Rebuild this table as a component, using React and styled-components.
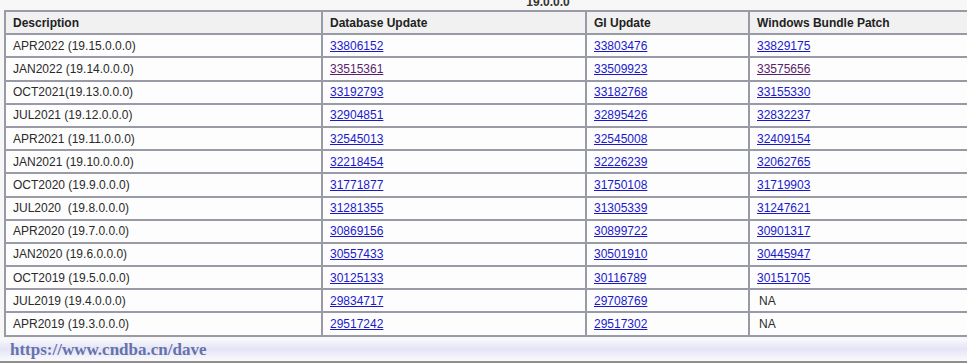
import React from 'react';
import styled, { createGlobalStyle } from 'styled-components';

const GlobalStyle = createGlobalStyle`
  html, body {
    margin: 0;
    padding: 0;
    background: #ffffff;
    overflow: hidden;
  }
  body {
    font-family: Arial, "Liberation Sans", sans-serif;
  }
`;

const Page = styled.div`
  width: 967px;
  height: 363px;
  overflow: hidden;
  background: #f7f7f7;
  display: flex;
  flex-direction: column;
`;

const TableWrap = styled.div`
  margin-top: -5px;
  padding-left: 4px;
`;

const Caption = styled.div`
  width: 1088px;
  text-align: center;
  font-weight: bold;
  font-size: 12px;
  line-height: 15px;
  color: #333;
`;

const Table = styled.table`
  width: 1088px;
  border-collapse: collapse;
  table-layout: fixed;
  border-bottom: 2px solid #3a3a3a;
`;

const HeadCell = styled.th`
  background: #f1f1f1;
  border: 2px solid #989aa6;
  text-align: left;
  font-weight: bold;
  font-size: 12px;
  color: #222;
  height: 19.2px;
  padding: 1px 7px;
`;

const Cell = styled.td`
  background: #fdfdfd;
  border: 2px solid #989aa6;
  font-size: 12px;
  color: #2a2a2a;
  height: 19.2px;
  padding: 1px 7px 1px ${(p) => (p.$na ? 9 : 7)}px;
  white-space: pre;
`;

const PatchLink = styled.a`
  color: ${(p) => (p.$visited ? '#5a1f6e' : '#1a1acc')};
  text-decoration: underline;
`;

const Footer = styled.div`
  margin-top: 2px;
  height: 22px;
  display: flex;
  align-items: center;
  padding-left: 10px;
  background: linear-gradient(to bottom, #f9f9fc 0%, #e4e4f6 45%, #eeeefa 70%, #fafafa 100%);
  border-bottom: 2px solid #8e8e8e;
`;

const Watermark = styled.span`
  font-family: "Liberation Serif", "Times New Roman", serif;
  font-weight: bold;
  font-size: 17px;
  color: #6672ad;
`;

const rows = [
  ['APR2022 (19.15.0.0.0)', '33806152', '33803476', '33829175'],
  ['JAN2022 (19.14.0.0.0)', '33515361', '33509923', '33575656', true],
  ['OCT2021(19.13.0.0.0)', '33192793', '33182768', '33155330'],
  ['JUL2021 (19.12.0.0.0)', '32904851', '32895426', '32832237'],
  ['APR2021 (19.11.0.0.0)', '32545013', '32545008', '32409154'],
  ['JAN2021 (19.10.0.0.0)', '32218454', '32226239', '32062765'],
  ['OCT2020 (19.9.0.0.0)', '31771877', '31750108', '31719903'],
  ['JUL2020  (19.8.0.0.0)', '31281355', '31305339', '31247621'],
  ['APR2020 (19.7.0.0.0)', '30869156', '30899722', '30901317'],
  ['JAN2020 (19.6.0.0.0)', '30557433', '30501910', '30445947'],
  ['OCT2019 (19.5.0.0.0)', '30125133', '30116789', '30151705'],
  ['JUL2019 (19.4.0.0.0)', '29834717', '29708769', 'NA'],
  ['APR2019 (19.3.0.0.0)', '29517242', '29517302', 'NA'],
];

function Patch({ value, visited }) {
  if (value === 'NA') return 'NA';
  return <PatchLink href="#" $visited={visited}>{value}</PatchLink>;
}

export default function App() {
  return (
    <Page>
      <GlobalStyle />
      <TableWrap>
        <Caption>19.0.0.0</Caption>
        <Table>
          <colgroup>
            <col style={{ width: 317 }} />
            <col style={{ width: 264 }} />
            <col style={{ width: 163 }} />
            <col />
          </colgroup>
          <thead>
            <tr>
              <HeadCell>Description</HeadCell>
              <HeadCell>Database Update</HeadCell>
              <HeadCell>GI Update</HeadCell>
              <HeadCell>Windows Bundle Patch</HeadCell>
            </tr>
          </thead>
          <tbody>
            {rows.map(([desc, db, gi, win, visited]) => (
              <tr key={desc}>
                <Cell>{desc}</Cell>
                <Cell><Patch value={db} visited={visited} /></Cell>
                <Cell><Patch value={gi} /></Cell>
                <Cell $na={win === 'NA'}><Patch value={win} visited={visited} /></Cell>
              </tr>
            ))}
          </tbody>
        </Table>
      </TableWrap>
      <Footer>
        <Watermark>https://www.cndba.cn/dave</Watermark>
      </Footer>
    </Page>
  );
}
